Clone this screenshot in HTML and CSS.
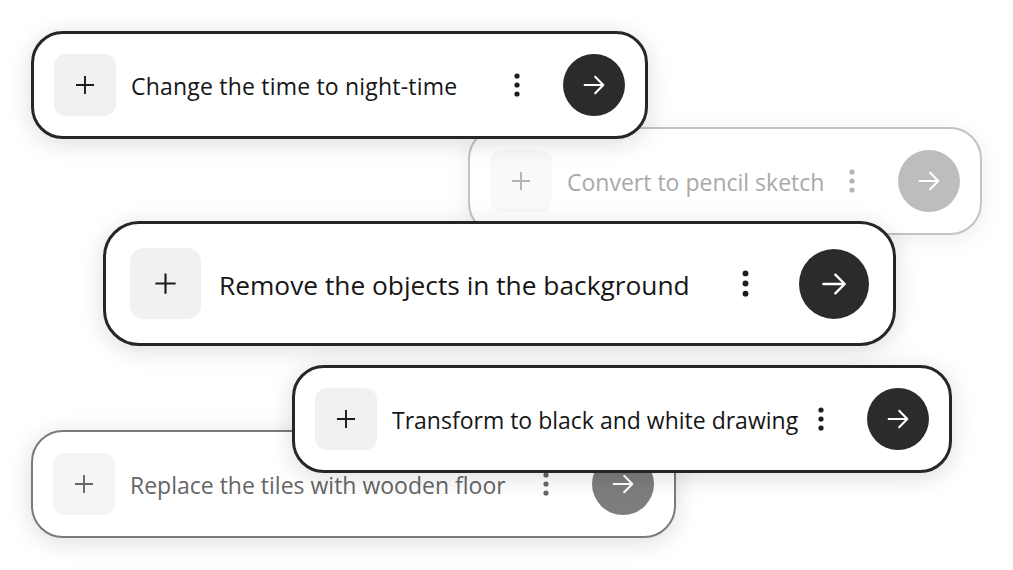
FILE: index.html
```html
<!DOCTYPE html>
<html lang="en">
<head>
    <meta charset="UTF-8">
    <meta name="viewport" content="width=device-width, initial-scale=1.0">
    <title>Prompt bars</title>
    <link rel="stylesheet" href="styles.css">
</head>
<body>

    <div class="canvas">

        <!-- faded ones sit behind -->
        <div class="card card-faint card-pencil">
            <div class="add"><svg viewBox="0 0 24 24"><path d="M12 3v18M3 12h18"/></svg></div>
            <span class="prompt">Convert to pencil sketch</span>
            <svg class="more" viewBox="0 0 6 24"><circle cx="3" cy="3" r="2.6"/><circle cx="3" cy="12" r="2.6"/><circle cx="3" cy="21" r="2.6"/></svg>
            <div class="send"><svg viewBox="0 0 24 24"><path d="M4 12h16M13 5l7 7-7 7"/></svg></div>
        </div>

        <div class="card card-muted card-tiles">
            <div class="add"><svg viewBox="0 0 24 24"><path d="M12 3v18M3 12h18"/></svg></div>
            <span class="prompt">Replace the tiles with wooden floor</span>
            <svg class="more" viewBox="0 0 6 24"><circle cx="3" cy="3" r="2.6"/><circle cx="3" cy="12" r="2.6"/><circle cx="3" cy="21" r="2.6"/></svg>
            <div class="send"><svg viewBox="0 0 24 24"><path d="M4 12h16M13 5l7 7-7 7"/></svg></div>
        </div>

        <div class="card card-night">
            <div class="add"><svg viewBox="0 0 24 24"><path d="M12 3v18M3 12h18"/></svg></div>
            <span class="prompt">Change the time to night-time</span>
            <svg class="more" viewBox="0 0 6 24"><circle cx="3" cy="3" r="2.6"/><circle cx="3" cy="12" r="2.6"/><circle cx="3" cy="21" r="2.6"/></svg>
            <div class="send"><svg viewBox="0 0 24 24"><path d="M4 12h16M13 5l7 7-7 7"/></svg></div>
        </div>

        <div class="card card-lg card-objects">
            <div class="add"><svg viewBox="0 0 24 24"><path d="M12 3v18M3 12h18"/></svg></div>
            <span class="prompt">Remove the objects in the background</span>
            <svg class="more" viewBox="0 0 6 24"><circle cx="3" cy="3" r="2.6"/><circle cx="3" cy="12" r="2.6"/><circle cx="3" cy="21" r="2.6"/></svg>
            <div class="send"><svg viewBox="0 0 24 24"><path d="M4 12h16M13 5l7 7-7 7"/></svg></div>
        </div>

        <div class="card card-drawing">
            <div class="add"><svg viewBox="0 0 24 24"><path d="M12 3v18M3 12h18"/></svg></div>
            <span class="prompt">Transform to black and white drawing</span>
            <svg class="more" viewBox="0 0 6 24"><circle cx="3" cy="3" r="2.6"/><circle cx="3" cy="12" r="2.6"/><circle cx="3" cy="21" r="2.6"/></svg>
            <div class="send"><svg viewBox="0 0 24 24"><path d="M4 12h16M13 5l7 7-7 7"/></svg></div>
        </div>

    </div>

</body>
</html>
```

FILE: styles.css
```css
body {
    margin: 0;
    background-color: #fff;
    font-family: "Open Sans", "Noto Sans", sans-serif;
    color: #161616;
}

.canvas {
    position: relative;
    width: 1013px;
    height: 570px;
    overflow: hidden;
}

/* one prompt bar */
.card {
    position: absolute;
    box-sizing: border-box;
    height: 108px;
    display: flex;
    align-items: center;
    padding: 0 20px;
    background-color: #fff;
    border: 3px solid #262626;
    border-radius: 32px;
    box-shadow: 0 4px 24px rgba(0, 0, 0, 0.14);
}

.add {
    flex: none;
    width: 62px;
    height: 62px;
    border-radius: 12px;
    background-color: #f1f1f1;
    display: flex;
    align-items: center;
    justify-content: center;
}

.add svg {
    width: 24px;
    height: 24px;
    fill: none;
    stroke: #1c1c1c;
    stroke-width: 1.9;
}

.prompt {
    flex: 1;
    margin-left: 15px;
    margin-top: 2px;
    font-size: 23px;
    white-space: nowrap;
}

.card-night .prompt {
    letter-spacing: 0.2px;
}

.more {
    flex: none;
    width: 6px;
    height: 24px;
    margin-right: 43px;
    fill: #1c1c1c;
}

.send {
    flex: none;
    width: 62px;
    height: 62px;
    border-radius: 50%;
    background-color: #2b2b2b;
    display: flex;
    align-items: center;
    justify-content: center;
}

.send svg {
    width: 28px;
    height: 28px;
    fill: none;
    stroke: #fff;
    stroke-width: 1.8;
    stroke-linecap: round;
    stroke-linejoin: round;
}

/* bigger middle bar */
.card-lg {
    height: 125px;
    padding: 0 24px;
    border-radius: 36px;
}

.card-lg .add {
    width: 71px;
    height: 71px;
    border-radius: 14px;
}

.card-lg .add svg {
    width: 27px;
    height: 27px;
}

.card-lg .prompt {
    margin-left: 18px;
    font-size: 26.3px;
}

.card-lg .more {
    width: 7px;
    height: 27px;
    margin-right: 50px;
}

.card-lg .send {
    width: 70px;
    height: 70px;
}

.card-lg .send svg {
    width: 32px;
    height: 32px;
}

/* light grey bar in the back */
.card-faint {
    border: 2px solid #c3c3c3;
    color: #a9a9a9;
    box-shadow: 0 4px 22px rgba(0, 0, 0, 0.08);
}

.card-faint .add {
    background-color: #f9f9f9;
}

.card-faint .add svg {
    stroke: #b4b4b4;
}

.card-faint .more {
    fill: #b4b4b4;
}

.card-faint .send {
    background-color: #bdbdbd;
}

/* mid grey bar */
.card-muted {
    border: 2.5px solid #7a7a7a;
    color: #666;
}

.card-muted .add {
    background-color: #f5f5f5;
}

.card-muted .add svg {
    stroke: #666;
}

.card-muted .more {
    fill: #666;
}

.card-muted .send {
    background-color: #7d7d7d;
}

/* where each bar sits */
.card-night {
    left: 31px;
    top: 31px;
    width: 617px;
}

.card-pencil {
    left: 468px;
    top: 127px;
    width: 514px;
}

.card-objects {
    left: 103px;
    top: 221px;
    width: 793px;
}

.card-drawing {
    left: 292px;
    top: 365px;
    width: 660px;
}

.card-tiles {
    left: 31px;
    top: 430px;
    width: 645px;
}
```
